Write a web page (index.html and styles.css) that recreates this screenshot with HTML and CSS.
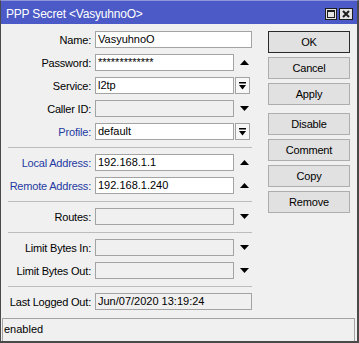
FILE: index.html
```html
<!DOCTYPE html>
<html>
<head>
<meta charset="utf-8">
<link rel="stylesheet" href="styles.css">
</head>
<body>
<div class="win">
  <div class="title">
    <span class="title-text">PPP Secret &lt;VasyuhnoO&gt;</span>
    <div class="tbtns">
      <svg class="tb" width="12" height="12" viewBox="0 0 12 12"><rect x="0.5" y="0.5" width="11" height="11" fill="#e4e4e4" stroke="#1e1e1e"/><rect x="2.5" y="2.5" width="7" height="7" fill="none" stroke="#1e1e1e"/><line x1="2" y1="3.5" x2="10" y2="3.5" stroke="#1e1e1e"/></svg>
      <svg class="tb" width="14" height="12" viewBox="0 0 14 12"><rect x="0.5" y="0.5" width="13" height="11" fill="#e4e4e4" stroke="#1e1e1e"/><path d="M4 3 L10 9 M10 3 L4 9" stroke="#1e1e1e" stroke-width="2"/></svg>
    </div>
  </div>
  <div class="body">
    <div class="form">
      <div class="row"><label class="lbl">Name:</label><div class="field full">VasyuhnoO</div></div>
      <div class="row"><label class="lbl">Password:</label><div class="field">*************</div><div class="ic"><svg width="9" height="5" viewBox="0 0 9 5"><polygon points="0,5 9,5 4.5,0" fill="#000"/></svg></div></div>
      <div class="row"><label class="lbl">Service:</label><div class="field">l2tp</div><div class="combo"><svg width="7" height="8" viewBox="0 0 7 8"><rect x="0" y="0" width="7" height="1.5" fill="#000"/><polygon points="0,3 7,3 3.5,7.5" fill="#000"/></svg></div></div>
      <div class="row"><label class="lbl">Caller ID:</label><div class="field dis"></div><div class="ic"><svg width="9" height="5" viewBox="0 0 9 5"><polygon points="0,0 9,0 4.5,5" fill="#000"/></svg></div></div>
      <div class="row"><label class="lbl blue">Profile:</label><div class="field">default</div><div class="combo"><svg width="7" height="8" viewBox="0 0 7 8"><rect x="0" y="0" width="7" height="1.5" fill="#000"/><polygon points="0,3 7,3 3.5,7.5" fill="#000"/></svg></div></div>
      <div class="sep"></div>
      <div class="row"><label class="lbl blue">Local Address:</label><div class="field">192.168.1.1</div><div class="ic"><svg width="9" height="5" viewBox="0 0 9 5"><polygon points="0,5 9,5 4.5,0" fill="#000"/></svg></div></div>
      <div class="row"><label class="lbl blue">Remote Address:</label><div class="field">192.168.1.240</div><div class="ic"><svg width="9" height="5" viewBox="0 0 9 5"><polygon points="0,5 9,5 4.5,0" fill="#000"/></svg></div></div>
      <div class="sep"></div>
      <div class="row"><label class="lbl">Routes:</label><div class="field dis"></div><div class="ic"><svg width="9" height="5" viewBox="0 0 9 5"><polygon points="0,0 9,0 4.5,5" fill="#000"/></svg></div></div>
      <div class="sep"></div>
      <div class="row"><label class="lbl">Limit Bytes In:</label><div class="field dis"></div><div class="ic"><svg width="9" height="5" viewBox="0 0 9 5"><polygon points="0,0 9,0 4.5,5" fill="#000"/></svg></div></div>
      <div class="row"><label class="lbl">Limit Bytes Out:</label><div class="field dis"></div><div class="ic"><svg width="9" height="5" viewBox="0 0 9 5"><polygon points="0,0 9,0 4.5,5" fill="#000"/></svg></div></div>
      <div class="sep"></div>
      <div class="row"><label class="lbl">Last Logged Out:</label><div class="field full dis">Jun/07/2020 13:19:24</div></div>
    </div>
    <div class="buttons">
      <div class="btn default">OK</div>
      <div class="btn">Cancel</div>
      <div class="btn">Apply</div>
      <div class="btn gap">Disable</div>
      <div class="btn">Comment</div>
      <div class="btn">Copy</div>
      <div class="btn">Remove</div>
    </div>
  </div>
  <div class="status">enabled</div>
</div>
</body>
</html>
```

FILE: styles.css
```css
html, body {
  margin: 0;
  padding: 0;
  background: #f0f0f0;
}
.win {
  width: 359px;
  height: 343px;
  box-sizing: border-box;
  border-left: 1px solid #4a4a4a;
  border-right: 2px solid #4a4a4a;
  border-bottom: 2px solid #4a4a4a;
  border-top: 1px solid #8f97d8;
  background: #f0f0f0;
  display: flex;
  flex-direction: column;
  font-family: "Liberation Sans", Arial, sans-serif;
  font-size: 11px;
  color: #000;
}
.title {
  height: 23px;
  flex: none;
  background: #4b5ac6;
  display: flex;
  align-items: center;
  justify-content: space-between;
  padding: 0 4px 0 5px;
}
.title-text {
  color: #fff;
  font-size: 12px;
  padding-top: 3px;
  letter-spacing: -0.2px;
}
.tbtns {
  display: flex;
  gap: 2px;
  margin-top: 3px;
}
.tb { display: block; }
.body {
  flex: 1;
  display: flex;
  padding-top: 1px;
}
.form {
  width: 251px;
  display: flex;
  flex-direction: column;
}
.row {
  display: flex;
  align-items: center;
  height: 17px;
  margin-top: 6px;
}
.lbl {
  width: 94px;
  box-sizing: border-box;
  padding-right: 4px;
  text-align: right;
  white-space: nowrap;
  letter-spacing: -0.2px;
}
.blue { color: #1f3aa3; }
.field {
  width: 139px;
  height: 17px;
  box-sizing: border-box;
  border: 1px solid #a3a3a3;
  background: #fff;
  padding-left: 2px;
  line-height: 15px;
  white-space: nowrap;
  overflow: hidden;
}
.field.full { width: 157px; }
.field.dis { background: #f0f0f0; }
.ic {
  width: 18px;
  height: 17px;
  display: flex;
  align-items: center;
  justify-content: center;
}
.ic svg { display: block; margin-left: 2px; }
.combo {
  width: 15px;
  height: 17px;
  margin-left: 1px;
  box-sizing: border-box;
  border: 1px solid #a3a3a3;
  background: #f7f7f7;
  display: flex;
  align-items: center;
  justify-content: center;
}
.combo svg { display: block; }
.sep {
  height: 1px;
  margin: 7px 0 0 7px;
  background: #bcbcbc;
}
.buttons {
  margin-left: 16px;
  width: 82px;
  display: flex;
  flex-direction: column;
  gap: 4px;
  padding-top: 6px;
}
.btn {
  height: 22px;
  box-sizing: border-box;
  border: 1px solid #adadad;
  background: #e1e1e1;
  display: flex;
  align-items: center;
  justify-content: center;
  letter-spacing: -0.2px;
}
.btn.default { border-color: #2a2a2a; }
.btn.gap { margin-top: 4px; }
.status {
  flex: none;
  height: 23px;
  box-sizing: border-box;
  margin: 0 2px 0 1px;
  border: 1px solid #a3a3a3;
  border-bottom: none;
  padding-left: 1px;
  line-height: 20px;
}
```
